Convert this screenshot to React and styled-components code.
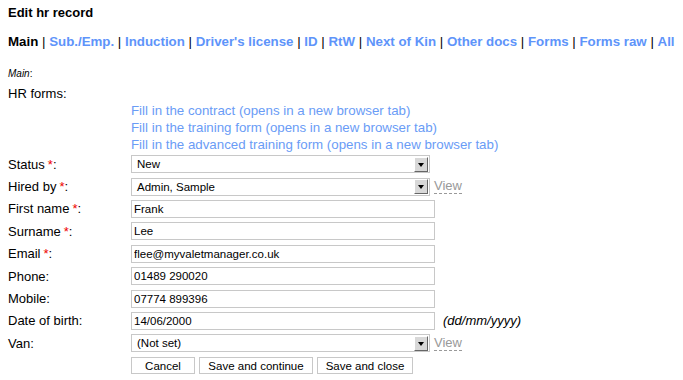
import React from "react";
import styled, { createGlobalStyle } from "styled-components";

const GlobalStyle = createGlobalStyle`
  body {
    margin: 0;
    padding: 0 8px;
    background: #fff;
    font-family: Arial, "Liberation Sans", Helvetica, sans-serif;
    font-size: 13px;
    color: #000;
  }
`;

const Title = styled.h1`
  margin: 5px 0 0;
  font-size: 13px;
  font-weight: bold;
  line-height: 16px;
`;

const Nav = styled.div`
  margin-top: 13px;
  font-size: 13.3px;
  line-height: 16px;
  font-weight: bold;
  white-space: nowrap;
`;

const NavLink = styled.a`
  color: ${(p) => (p.$active ? "#000" : "#5e94fa")};
  text-decoration: none;
`;

const Sep = styled.span`
  font-weight: normal;
`;

const Section = styled.div`
  margin-top: 18px;
  font-size: 10px;
  line-height: 12px;
  em {
    font-style: italic;
  }
`;

const Form = styled.div`
  display: grid;
  grid-template-columns: 123px auto;
  margin-top: 4px;
`;

const Label = styled.div`
  height: ${(p) => p.$h || 22.4}px;
  display: flex;
  align-items: center;
  white-space: nowrap;
`;

const Field = styled.div`
  height: 22.4px;
  display: flex;
  align-items: center;
  gap: 4px;
`;

const Req = styled.span`
  color: #e00;
  margin-left: 3px;
`;

const LinkList = styled.div`
  display: flex;
  flex-direction: column;
  a {
    color: #6a9cf6;
    text-decoration: none;
    line-height: 17px;
    font-size: 13.3px;
  }
`;

const Input = styled.input`
  box-sizing: border-box;
  width: 304px;
  height: 18px;
  margin: 0;
  padding: 1px 2px;
  border: 1px solid #c8c8c8;
  font-family: Arial, "Liberation Sans", sans-serif;
  font-size: 11.5px;
  color: #000;
  outline: none;
`;

const Select = styled.div`
  box-sizing: border-box;
  width: ${(p) => p.$w || 299}px;
  height: 18px;
  border: 1px solid #c8c8c8;
  display: flex;
  align-items: center;
  font-size: 11.5px;
  padding-left: 5px;
`;

const SelectText = styled.span`
  flex: 1;
`;

const Arrow = styled.span`
  box-sizing: border-box;
  width: 14px;
  height: 15px;
  margin-right: 1px;
  background: #d8d8d8;
  border-top: 1px solid #fff;
  border-left: 1px solid #fff;
  border-right: 1px solid #666;
  border-bottom: 1px solid #666;
  display: flex;
  align-items: center;
  justify-content: center;
  &::after {
    content: "";
    border-left: 3.5px solid transparent;
    border-right: 3.5px solid transparent;
    border-top: 4px solid #000;
    margin-top: 1px;
  }
`;

const View = styled.a`
  color: #999;
  text-decoration: none;
  border-bottom: 1px dashed #999;
  line-height: 14px;
  font-size: 13px;
`;

const Hint = styled.span`
  font-style: italic;
  margin-left: 4px;
`;

const Buttons = styled.div`
  display: flex;
  gap: 4px;
  height: 22px;
  align-items: center;
`;

const Button = styled.button`
  box-sizing: border-box;
  height: 17px;
  width: ${(p) => p.$w}px;
  padding: 0;
  background: #fff;
  border: 1px solid #c8c8c8;
  font-family: Arial, "Liberation Sans", sans-serif;
  font-size: 11.5px;
  color: #000;
`;

const tabs = [
  "Main",
  "Sub./Emp.",
  "Induction",
  "Driver's license",
  "ID",
  "RtW",
  "Next of Kin",
  "Other docs",
  "Forms",
  "Forms raw",
  "All",
];

const Dropdown = ({ value, view }) => (
  <Field>
    <Select>
      <SelectText>{value}</SelectText>
      <Arrow />
    </Select>
    {view && <View>View</View>}
  </Field>
);

const TextRow = ({ label, req, value, hint }) => (
  <>
    <Label>
      {label}
      {req && <Req>*</Req>}:
    </Label>
    <Field>
      <Input defaultValue={value} />
      {hint && <Hint>{hint}</Hint>}
    </Field>
  </>
);

export default function App() {
  return (
    <>
      <GlobalStyle />
      <Title>Edit hr record</Title>
      <Nav>
        {tabs.map((t, i) => (
          <React.Fragment key={t}>
            {i > 0 && <Sep> | </Sep>}
            <NavLink $active={i === 0}>{t}</NavLink>
          </React.Fragment>
        ))}
      </Nav>
      <Section>
        <em>Main</em>:
      </Section>
      <Form>
        <Label $h={18}>HR forms:</Label>
        <div />
        <div />
        <LinkList>
          <a>Fill in the contract (opens in a new browser tab)</a>
          <a>Fill in the training form (opens in a new browser tab)</a>
          <a>Fill in the advanced training form (opens in a new browser tab)</a>
        </LinkList>
        <Label>
          Status<Req>*</Req>:
        </Label>
        <Dropdown value="New" />
        <Label>
          Hired by<Req>*</Req>:
        </Label>
        <Dropdown value="Admin, Sample" view />
        <TextRow label="First name" req value="Frank" />
        <TextRow label="Surname" req value="Lee" />
        <TextRow label="Email" req value="flee@myvaletmanager.co.uk" />
        <TextRow label="Phone" value="01489 290020" />
        <TextRow label="Mobile" value="07774 899396" />
        <TextRow label="Date of birth" value="14/06/2000" hint="(dd/mm/yyyy)" />
        <Label>Van:</Label>
        <Dropdown value="(Not set)" view />
        <div />
        <Buttons>
          <Button $w={64}>Cancel</Button>
          <Button $w={114}>Save and continue</Button>
          <Button $w={96}>Save and close</Button>
        </Buttons>
      </Form>
    </>
  );
}
